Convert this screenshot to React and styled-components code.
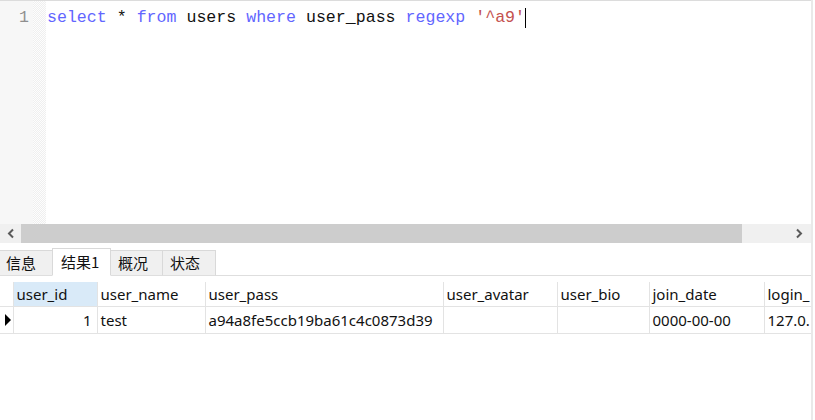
import React from 'react';
import styled, { createGlobalStyle } from 'styled-components';

const GlobalStyle = createGlobalStyle`
    html, body {
        margin: 0;
        padding: 0;
        background: #ffffff;
        overflow: hidden;
    }
`;

const Window = styled.div`
    width: 811px;
    height: 420px;
    border-right: 2px solid #e9e9e9;
    display: flex;
    flex-direction: column;
    background: #ffffff;
`;

const Editor = styled.div`
    height: 223px;
    display: flex;
    border-top: 1px solid #dcdcdc;
`;

const Gutter = styled.div`
    width: 33px;
    background: #f7f7f7;
    box-sizing: border-box;
    padding: 7px 4px 0 0;
    text-align: right;
    font-family: "Liberation Mono", monospace;
    font-size: 16.6px;
    line-height: 20px;
    color: #8f8f8f;
`;

const FoldMargin = styled.div`
    width: 13px;
    background-color: #fbfbfb;
    background-image: repeating-conic-gradient(#efefef 0 25%, #fdfdfd 0 50%);
    background-size: 2px 2px;
`;

const Code = styled.div`
    flex: 1;
    padding: 7px 0 0 1px;
    font-family: "Liberation Mono", monospace;
    font-size: 16.6px;
    line-height: 20px;
    color: #111111;
    white-space: pre;
`;

const Keyword = styled.span`
    color: #6266ff;
`;

const Str = styled.span`
    color: #c4524e;
`;

const Caret = styled.span`
    display: inline-block;
    width: 1px;
    height: 20px;
    background: #000000;
    vertical-align: top;
`;

const HScroll = styled.div`
    height: 19px;
    display: flex;
    align-items: stretch;
    background: #f0f0f0;
`;

const Arrow = styled.div`
    width: ${(p) => p.w}px;
    display: flex;
    align-items: center;
    justify-content: center;
`;

const Track = styled.div`
    flex: 1;
    display: flex;
`;

const Thumb = styled.div`
    width: 721px;
    background: #cdcdcd;
`;

const TabBar = styled.div`
    margin-top: 5px;
    height: 27px;
    display: flex;
    align-items: flex-end;
    border-bottom: 1px solid #dedede;
`;

const Tab = styled.div`
    box-sizing: border-box;
    width: ${(p) => p.w}px;
    height: ${(p) => (p.active ? 28 : 26)}px;
    margin-bottom: -1px;
    padding-left: ${(p) => (p.active ? 8 : 7)}px;
    padding-bottom: 1px;
    display: flex;
    align-items: center;
    background: ${(p) => (p.active ? '#ffffff' : '#f0f0f0')};
    border: 1px solid #d9d9d9;
    border-bottom: ${(p) => (p.active ? '1px solid #ffffff' : '1px solid #dedede')};
    border-left: ${(p) => (p.first ? 'none' : '1px solid #d9d9d9')};
    margin-left: -1px;
    font-family: "Noto Sans CJK SC", "Noto Sans", sans-serif;
    font-size: 15px;
    color: #111111;
    position: relative;
    z-index: ${(p) => (p.active ? 1 : 0)};
`;

const GridWrap = styled.div`
    margin-top: 6px;
    overflow: hidden;
`;

const Grid = styled.table`
    border-collapse: collapse;
    table-layout: fixed;
    width: 860px;
    font-family: "Noto Sans", "Noto Sans CJK SC", sans-serif;
    font-size: 15px;
    color: #111111;
`;

const Head = styled.th`
    height: 24px;
    padding: 0 0 0 3px;
    text-align: left;
    font-weight: normal;
    white-space: nowrap;
    overflow: hidden;
    background: ${(p) => (p.selected ? '#d9eaf8' : '#ffffff')};
    border-right: 1px solid #e3e3e3;
    border-bottom: 1px solid #e3e3e3;
`;

const Cell = styled.td`
    height: 25px;
    padding: 0 ${(p) => (p.num ? '5px' : '0')} 1px 3px;
    text-align: ${(p) => (p.num ? 'right' : 'left')};
    white-space: nowrap;
    overflow: hidden;
    background: #ffffff;
    border-right: 1px solid #e3e3e3;
    border-bottom: 1px solid #e3e3e3;
`;

const Pointer = styled.div`
    width: 0;
    height: 0;
    margin-left: 2px;
    border-top: 6px solid transparent;
    border-bottom: 6px solid transparent;
    border-left: 6px solid #000000;
`;

const Chevron = ({ dir }) => (
    <svg width="8" height="11" viewBox="0 0 8 11">
        <polyline
            points={dir === 'left' ? '6,1.5 2,5.5 6,9.5' : '2,1.5 6,5.5 2,9.5'}
            fill="none"
            stroke="#5a5a5a"
            strokeWidth="2"
        />
    </svg>
);

const columns = [
    { name: '', w: 13 },
    { name: 'user_id', w: 84, selected: true },
    { name: 'user_name', w: 108 },
    { name: 'user_pass', w: 238 },
    { name: 'user_avatar', w: 114 },
    { name: 'user_bio', w: 92 },
    { name: 'join_date', w: 115 },
    { name: 'login_', w: 96 },
];

const tabs = [
    { label: '信息', w: 54, first: true },
    { label: '结果1', w: 59, active: true },
    { label: '概况', w: 53 },
    { label: '状态', w: 54 },
];

export default function App() {
    return (
        <>
            <GlobalStyle />
            <Window>
                <Editor>
                    <Gutter>1</Gutter>
                    <FoldMargin />
                    <Code>
                        <Keyword>select</Keyword> * <Keyword>from</Keyword> users{' '}
                        <Keyword>where</Keyword> user_pass <Keyword>regexp</Keyword>{' '}
                        <Str>'^a9'</Str>
                        <Caret />
                    </Code>
                </Editor>
                <HScroll>
                    <Arrow w={21}><Chevron dir="left" /></Arrow>
                    <Track><Thumb /></Track>
                    <Arrow w={24}><Chevron dir="right" /></Arrow>
                </HScroll>
                <TabBar>
                    {tabs.map((t) => (
                        <Tab key={t.label} w={t.w} active={t.active} first={t.first}>
                            {t.label}
                        </Tab>
                    ))}
                </TabBar>
                <GridWrap>
                    <Grid>
                        <colgroup>
                            {columns.map((c, i) => (
                                <col key={i} style={{ width: c.w }} />
                            ))}
                        </colgroup>
                        <thead>
                            <tr>
                                {columns.map((c, i) => (
                                    <Head key={i} selected={c.selected}>{c.name}</Head>
                                ))}
                            </tr>
                        </thead>
                        <tbody>
                            <tr>
                                <Cell><Pointer /></Cell>
                                <Cell num>1</Cell>
                                <Cell>test</Cell>
                                <Cell>a94a8fe5ccb19ba61c4c0873d39</Cell>
                                <Cell />
                                <Cell />
                                <Cell>0000-00-00</Cell>
                                <Cell>127.0.</Cell>
                            </tr>
                        </tbody>
                    </Grid>
                </GridWrap>
            </Window>
        </>
    );
}
